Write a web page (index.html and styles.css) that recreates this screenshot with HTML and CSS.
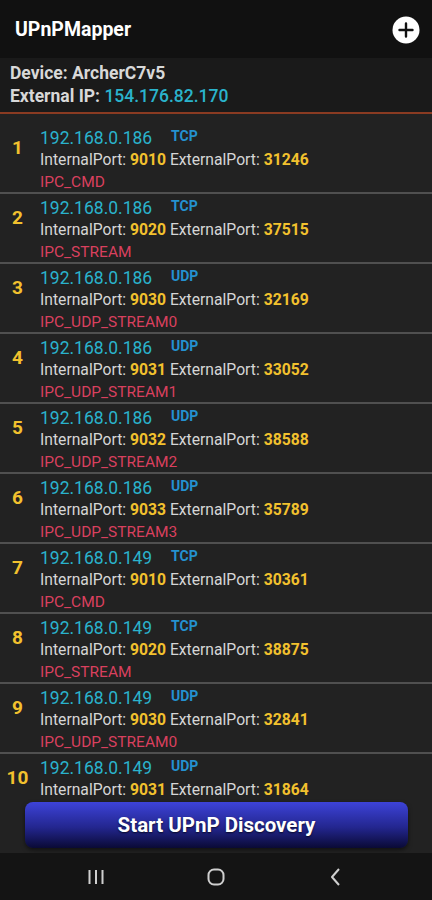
FILE: index.html
```html
<!DOCTYPE html>
<html lang="en">
<head>
    <meta charset="UTF-8">
    <meta name="viewport" content="width=device-width, initial-scale=1.0">
    <title>UPnPMapper</title>
    <link rel="stylesheet" href="styles.css">
</head>
<body>

    <!-- App Bar -->
    <header class="app-bar">
        <h1>UPnPMapper</h1>
        <button class="add-btn" aria-label="Add">
            <svg width="28" height="28" viewBox="0 0 28 28">
                <circle cx="14" cy="14" r="13.5" fill="#fff"/>
                <path d="M14 7.5v13M7.5 14h13" stroke="#111" stroke-width="2.4" stroke-linecap="round"/>
            </svg>
        </button>
    </header>

    <!-- Device Info -->
    <section class="device-info">
        <p>Device: ArcherC7v5</p>
        <p>External IP: <span class="ext-ip">154.176.82.170</span></p>
    </section>

    <!-- Mappings -->
    <main class="content">
        <ul class="mappings">
            <li class="mapping">
                <span class="num">1</span>
                <div class="details">
                    <div class="line-ip"><span class="ip">192.168.0.186</span><span class="proto">TCP</span></div>
                    <div class="ports">InternalPort: <b>9010</b> ExternalPort: <b>31246</b></div>
                    <div class="desc">IPC_CMD</div>
                </div>
            </li>
            <li class="mapping">
                <span class="num">2</span>
                <div class="details">
                    <div class="line-ip"><span class="ip">192.168.0.186</span><span class="proto">TCP</span></div>
                    <div class="ports">InternalPort: <b>9020</b> ExternalPort: <b>37515</b></div>
                    <div class="desc">IPC_STREAM</div>
                </div>
            </li>
            <li class="mapping">
                <span class="num">3</span>
                <div class="details">
                    <div class="line-ip"><span class="ip">192.168.0.186</span><span class="proto">UDP</span></div>
                    <div class="ports">InternalPort: <b>9030</b> ExternalPort: <b>32169</b></div>
                    <div class="desc">IPC_UDP_STREAM0</div>
                </div>
            </li>
            <li class="mapping">
                <span class="num">4</span>
                <div class="details">
                    <div class="line-ip"><span class="ip">192.168.0.186</span><span class="proto">UDP</span></div>
                    <div class="ports">InternalPort: <b>9031</b> ExternalPort: <b>33052</b></div>
                    <div class="desc">IPC_UDP_STREAM1</div>
                </div>
            </li>
            <li class="mapping">
                <span class="num">5</span>
                <div class="details">
                    <div class="line-ip"><span class="ip">192.168.0.186</span><span class="proto">UDP</span></div>
                    <div class="ports">InternalPort: <b>9032</b> ExternalPort: <b>38588</b></div>
                    <div class="desc">IPC_UDP_STREAM2</div>
                </div>
            </li>
            <li class="mapping">
                <span class="num">6</span>
                <div class="details">
                    <div class="line-ip"><span class="ip">192.168.0.186</span><span class="proto">UDP</span></div>
                    <div class="ports">InternalPort: <b>9033</b> ExternalPort: <b>35789</b></div>
                    <div class="desc">IPC_UDP_STREAM3</div>
                </div>
            </li>
            <li class="mapping">
                <span class="num">7</span>
                <div class="details">
                    <div class="line-ip"><span class="ip">192.168.0.149</span><span class="proto">TCP</span></div>
                    <div class="ports">InternalPort: <b>9010</b> ExternalPort: <b>30361</b></div>
                    <div class="desc">IPC_CMD</div>
                </div>
            </li>
            <li class="mapping">
                <span class="num">8</span>
                <div class="details">
                    <div class="line-ip"><span class="ip">192.168.0.149</span><span class="proto">TCP</span></div>
                    <div class="ports">InternalPort: <b>9020</b> ExternalPort: <b>38875</b></div>
                    <div class="desc">IPC_STREAM</div>
                </div>
            </li>
            <li class="mapping">
                <span class="num">9</span>
                <div class="details">
                    <div class="line-ip"><span class="ip">192.168.0.149</span><span class="proto">UDP</span></div>
                    <div class="ports">InternalPort: <b>9030</b> ExternalPort: <b>32841</b></div>
                    <div class="desc">IPC_UDP_STREAM0</div>
                </div>
            </li>
            <li class="mapping">
                <span class="num">10</span>
                <div class="details">
                    <div class="line-ip"><span class="ip">192.168.0.149</span><span class="proto">UDP</span></div>
                    <div class="ports">InternalPort: <b>9031</b> ExternalPort: <b>31864</b></div>
                </div>
            </li>
        </ul>

        <button class="discover-btn">Start UPnP Discovery</button>
    </main>

    <!-- System Navigation -->
    <nav class="sys-nav">
        <svg width="20" height="18" viewBox="0 0 20 18">
            <path d="M3.5 2v14M10 2v14M16.5 2v14" stroke="#cfcfcf" stroke-width="2"/>
        </svg>
        <svg width="20" height="20" viewBox="0 0 20 20">
            <rect x="2.5" y="2.5" width="15" height="15" rx="5.5" fill="none" stroke="#cfcfcf" stroke-width="2"/>
        </svg>
        <svg width="20" height="20" viewBox="0 0 20 20">
            <path d="M14 2l-7 8 7 8" fill="none" stroke="#cfcfcf" stroke-width="2" stroke-linejoin="round"/>
        </svg>
    </nav>

</body>
</html>
```

FILE: styles.css
```css
body {
    font-family: Roboto, "Liberation Sans", sans-serif;
    margin: 0;
    padding: 0;
    width: 432px;
    height: 900px;
    display: flex;
    flex-direction: column;
    background-color: #222;
    color: #ddd;
    overflow: hidden;
}

/* App Bar */
.app-bar {
    height: 58px;
    flex: none;
    display: flex;
    align-items: center;
    justify-content: space-between;
    padding: 0 12px 0 15px;
    background-color: #111;
}

.app-bar h1 {
    margin: 0;
    font-size: 19.5px;
    font-weight: bold;
    color: #fff;
}

.add-btn {
    background: none;
    border: none;
    padding: 0;
    width: 28px;
    height: 28px;
    margin-top: 2px;
}

/* Device Info */
.device-info {
    flex: none;
    height: 56px;
    padding: 4px 10px 0;
    box-sizing: border-box;
    background-color: #1a1a1a;
    border-bottom: 2px solid #8a3b22;
}

.device-info p {
    margin: 0;
    font-size: 17.5px;
    font-weight: bold;
    line-height: 23px;
    color: #d8d8d8;
}

.ext-ip {
    color: #2ab3cc;
    font-weight: 500;
}

/* Mappings */
.content {
    flex: 1;
    position: relative;
    overflow: hidden;
    padding-top: 10px;
}

.mappings {
    list-style: none;
    margin: 0;
    padding: 0;
}

.mapping {
    display: flex;
    height: 68px;
    border-bottom: 2px solid #505050;
}

.mapping:last-child {
    border-bottom: none;
}

.num {
    width: 35px;
    flex: none;
    padding-top: 12px;
    text-align: center;
    font-size: 19px;
    font-weight: bold;
    color: #f2c12e;
}

.details {
    display: flex;
    flex-direction: column;
    padding-left: 5px;
    padding-top: 3px;
}

.line-ip {
    height: 22px;
    line-height: 22px;
    display: flex;
    align-items: baseline;
}

.ip {
    font-size: 17.5px;
    color: #2ab3cc;
    width: 131px;
}

.proto {
    font-size: 14px;
    font-weight: bold;
    color: #2491d0;
    position: relative;
    top: -3px;
}

.ports {
    height: 22px;
    line-height: 22px;
    font-size: 15.7px;
    color: #d6d6d6;
}

.ports b {
    color: #f2c12e;
}

.desc {
    height: 22px;
    line-height: 22px;
    font-size: 15.5px;
    color: #d9405e;
}

/* Button */
.discover-btn {
    position: absolute;
    left: 25px;
    right: 24px;
    bottom: 5px;
    height: 46px;
    border: none;
    border-radius: 8px;
    background: linear-gradient(to bottom, #3d43d8, #23268f 55%, #0a0a35);
    color: #fff;
    font-family: Roboto, "Liberation Sans", sans-serif;
    font-size: 20.5px;
    font-weight: bold;
    text-shadow: 0 1px 2px rgba(0, 0, 0, 0.7);
    box-shadow: 0 2px 4px rgba(0, 0, 0, 0.5);
}

/* System Navigation */
.sys-nav {
    flex: none;
    height: 47px;
    display: flex;
    align-items: center;
    justify-content: space-between;
    padding: 0 87px 0 86px;
    background-color: #141414;
}
```
